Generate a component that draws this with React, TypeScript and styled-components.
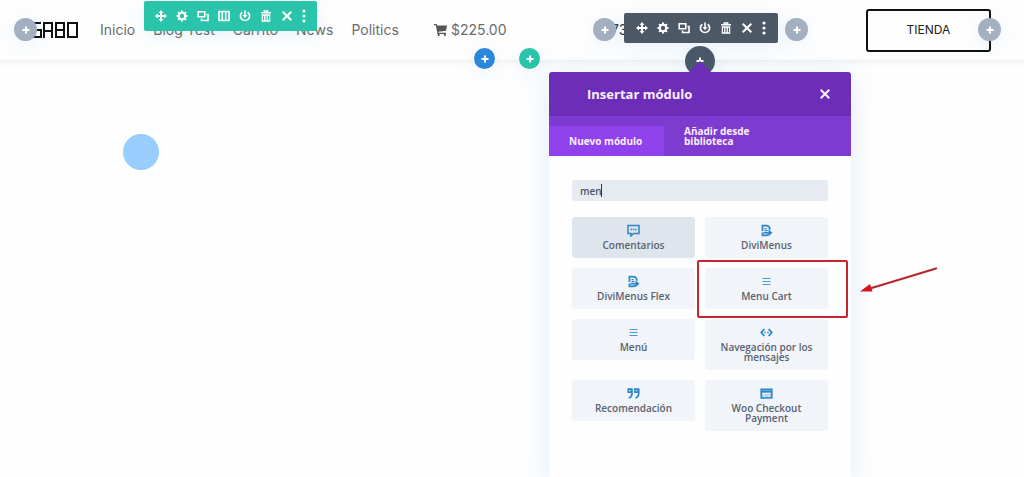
import React from "react";
import styled, { createGlobalStyle } from "styled-components";

const GlobalStyle = createGlobalStyle`
  *, *::before, *::after { box-sizing: border-box; }
  body { margin: 0; background: #fefefe; font-family: "Open Sans", sans-serif; }
  button, input { font: inherit; border: 0; margin: 0; padding: 0; }
  button { cursor: pointer; }
  svg { display: block; }
`;

const Page = styled.div`
  position: relative;
  min-height: 100vh;
  overflow: hidden;
`;

const Header = styled.header`
  position: relative;
  display: flex;
  align-items: center;
  height: 60px;
  padding: 0 33px;
  background: #fefefe;
  box-shadow: 0 1px 8px rgba(0, 0, 0, 0.08);
  font-family: Inter, sans-serif;
  font-size: 14px;
  line-height: 20px;
  color: #6c6c6c;
`;

const Logo = styled.a`
  flex: none;
  width: 45px;
  margin-right: 22px;
`;

const Nav = styled.nav`
  display: flex;
  gap: 18px;
  width: 334px;
  flex: none;
`;

const NavLink = styled.a`
  color: inherit;
  text-decoration: none;
  white-space: nowrap;
`;

const CartLink = styled(NavLink)`
  display: flex;
  align-items: center;
  gap: 4px;
  width: 177px;
  flex: none;
`;

const Phone = styled.span`
  color: #333;
`;

const StoreButton = styled.button`
  width: 125px;
  height: 43px;
  margin-left: auto;
  border: 2px solid #111;
  border-radius: 3px;
  background: #fefefe;
  color: #222;
  font-size: 12px;
`;

const Toolbar = styled.div<{ $tone: string; $left: number; $top: number; $pad: number }>`
  position: absolute;
  z-index: 3;
  left: ${(p) => p.$left}px;
  top: ${(p) => p.$top}px;
  display: flex;
  align-items: center;
  gap: 9px;
  height: 30px;
  padding: 0 ${(p) => p.$pad}px;
  border-radius: 2px;
  background: ${(p) => p.$tone};
  box-shadow: 0 4px 20px rgba(43, 135, 218, 0.1);
`;

const ToolButton = styled.button<{ $narrow?: boolean }>`
  display: grid;
  place-items: center;
  width: ${(p) => (p.$narrow ? 4 : 12)}px;
  height: 20px;
  background: none;
  color: #fff;
`;

const AddButton = styled.button<{ $tone: string; $x: number; $y: number; $size: number }>`
  position: absolute;
  z-index: 2;
  left: ${(p) => p.$x}px;
  top: ${(p) => p.$y}px;
  display: grid;
  place-items: center;
  width: ${(p) => p.$size}px;
  height: ${(p) => p.$size}px;
  border-radius: 50%;
  background: ${(p) => p.$tone};
  color: #fff;
  box-shadow: 0 4px 20px rgba(43, 135, 218, 0.1);
`;

const Loader = styled.div`
  width: 36px;
  height: 36px;
  margin: 74px 0 0 123px;
  border-radius: 50%;
  background: #99cdfd;
`;

const Dialog = styled.section`
  position: absolute;
  z-index: 4;
  top: 72px;
  bottom: 0;
  left: 549px;
  width: 302px;
  border-radius: 3px 3px 0 0;
  background: #fefefe;
  box-shadow: 0 5px 30px rgba(43, 135, 218, 0.16);

  &::before {
    content: "";
    position: absolute;
    top: -11px;
    left: 139px;
    border: 12px solid transparent;
    border-top: 0;
    border-bottom-color: #6c2eb9;
  }
`;

const DialogHeader = styled.div`
  display: flex;
  align-items: center;
  justify-content: space-between;
  height: 44px;
  padding: 0 20px 0 38px;
  border-radius: 3px 3px 0 0;
  background: #6c2eb9;
  color: #fbeeff;
`;

const DialogTitle = styled.h2`
  margin: 0;
  font-size: 13px;
  line-height: 20px;
  font-weight: 700;
`;

const CloseButton = styled.button`
  display: grid;
  place-items: center;
  width: 12px;
  height: 20px;
  background: none;
  color: inherit;
`;

const Tabs = styled.div`
  display: flex;
  align-items: flex-end;
  height: 40px;
  background: #7e3bd0;
`;

const Tab = styled.button<{ $active?: boolean }>`
  width: ${(p) => (p.$active ? 115 : 120)}px;
  height: ${(p) => (p.$active ? 30 : 40)}px;
  padding: 0 20px;
  background: ${(p) => (p.$active ? "#8f42ec" : "transparent")};
  color: #fbeeff;
  font-size: 10px;
  line-height: 10px;
  font-weight: 700;
  text-align: left;
  white-space: ${(p) => (p.$active ? "nowrap" : "normal")};
`;

const DialogBody = styled.div`
  padding: 24px 23px;
`;

const SearchField = styled.div`
  position: relative;
  margin-bottom: 16px;
`;

const SearchInput = styled.input`
  display: block;
  width: 100%;
  height: 21px;
  padding: 0 8px;
  border-radius: 3px;
  background: #e6eaf1;
  color: #4c5866;
  font-size: 10px;
  font-weight: 600;
  outline: 0;
`;

const Caret = styled.span`
  position: absolute;
  top: 4px;
  left: 29px;
  width: 1px;
  height: 13px;
  background: #333;
`;

const ModuleGrid = styled.div`
  display: grid;
  grid-template-columns: 1fr 1fr;
  align-items: start;
  gap: 10px;
`;

const ModuleCell = styled.div`
  position: relative;
`;

const ModuleButton = styled.button<{ $hovered?: boolean }>`
  display: flex;
  flex-direction: column;
  align-items: center;
  gap: 3px;
  width: 100%;
  padding: 7px 12px 8px;
  border-radius: 3px;
  background: ${(p) => (p.$hovered ? "#dfe5ec" : "#f1f4f9")};
  color: #58636f;
  font-size: 10px;
  line-height: 10px;
  font-weight: 600;

  svg { color: #2b87c8; }
`;

const Highlight = styled.div`
  position: absolute;
  inset: -8px -20px -9px -8px;
  border: 2px solid #c9232b;
  border-radius: 2px;
  pointer-events: none;
`;

const Arrow = styled.svg`
  position: absolute;
  z-index: 5;
  left: 858px;
  top: 264px;
`;

const stroke = { fill: "none", stroke: "currentColor", strokeWidth: 2 } as const;

const toolShapes: Record<string, React.ReactNode> = {
  Mover: (
    <>
      <path d="M6 2v8M2 6h8" {...stroke} />
      <path d="M6 0l2.400 3H3.600zM6 12l2.400-3H3.600zM0 6l3-2.400v4.800zM12 6l-3-2.400v4.800z" fill="currentColor" />
    </>
  ),
  Ajustes: (
    <>
      <circle cx="6" cy="6" r="3.200" {...stroke} />
      <path d="M6 .5v2M6 9.500v2M.5 6h2M9.500 6h2M2.100 2.100l1.400 1.400M8.500 8.500l1.400 1.400M2.100 9.900l1.400-1.400M8.500 3.500l1.400-1.400" {...stroke} />
    </>
  ),
  Duplicar: (
    <path d="M1.200 1.700h6.600v5H1.200zM9.500 4.500h1.500v6H4.500V8.500" {...stroke} strokeWidth={1.600} />
  ),
  Columnas: <path d="M1 1.500h10v9H1zM4.300 1.500v9M7.700 1.500v9" {...stroke} strokeWidth={1.600} />,
  Guardar: (
    <>
      <path d="M3.300 2.200a4.600 4.600 0 1 0 5.400 0" {...stroke} strokeWidth={1.700} />
      <path d="M6 .5V6" {...stroke} strokeWidth={1.600} />
      <path d="M3.500 5h5L6 8.200z" fill="currentColor" />
    </>
  ),
  Eliminar: (
    <>
      <path d="M1 2.800h10M4.300 2.500V1h3.400v1.500" {...stroke} strokeWidth={1.500} />
      <path d="M2.400 5v6h7.200V5zM4.800 5v6M7.200 5v6" {...stroke} strokeWidth={1.300} />
    </>
  ),
  Cerrar: <path d="M1.700 1.700l8.600 8.600M10.300 1.700l-8.600 8.600" {...stroke} />,
};

const ToolIcon = ({ name }: { name: string }) => (
  <svg width="12" height="12" viewBox="0 0 12 12" aria-hidden="true">{toolShapes[name]}</svg>
);

const Tools = ({ names }: { names: string[] }) => (
  <>
    {names.map((name) => (
      <ToolButton key={name} aria-label={name}><ToolIcon name={name} /></ToolButton>
    ))}
    <ToolButton $narrow aria-label="Más opciones">
      <svg width="4" height="14" viewBox="0 0 4 14" fill="currentColor" aria-hidden="true">
        <circle cx="2" cy="2" r="1.600" /><circle cx="2" cy="7" r="1.600" /><circle cx="2" cy="12" r="1.600" />
      </svg>
    </ToolButton>
  </>
);

const adders = [
  { label: "Añadir antes del logo", tone: "#a2b0c1", x: 14, y: 18, size: 23 },
  { label: "Añadir antes del módulo", tone: "#a2b0c1", x: 593, y: 18, size: 23 },
  { label: "Añadir después del módulo", tone: "#a2b0c1", x: 785, y: 18, size: 23 },
  { label: "Añadir después del botón", tone: "#a2b0c1", x: 978, y: 18, size: 23 },
  { label: "Añadir sección", tone: "#2b87da", x: 474, y: 48, size: 21 },
  { label: "Añadir fila", tone: "#29c4a9", x: 519, y: 48, size: 21 },
  { label: "Añadir módulo", tone: "#4c5866", x: 685, y: 46, size: 30 },
];

const comment = (
  <>
    <path d="M1 1.500h11v8H6.500L4 12V9.500H1z" {...stroke} strokeWidth={1.500} />
    <path d="M3.500 5.500h1.500M5.800 5.500h1.500M8.100 5.500h1.500" {...stroke} strokeWidth={1.500} />
  </>
);
const divi = (
  <>
    <path d="M2.500 7V1.700h3.500c2.300 0 3.700 1.600 3.800 4M2.500 8.500v2.800H6c1.200 0 2-.4 2.600-1" {...stroke} strokeWidth={1.800} />
    <path d="M4.500 4.600h2.200M4.500 6.600h3" {...stroke} strokeWidth={1.200} />
    <path d="M3.500 8.800h6" {...stroke} strokeWidth={1.600} />
    <path d="M8.500 5.500l4 3.300-4 3.500z" fill="currentColor" />
  </>
);
const lines = <path d="M2.500 3.500h8M2.500 6.500h8M2.500 9.500h8" {...stroke} strokeWidth={1} opacity={0.85} />;

const modules = [
  { label: "Comentarios", icon: comment, hovered: true },
  { label: "DiviMenus", icon: divi },
  { label: "DiviMenus Flex", icon: divi },
  { label: "Menu Cart", icon: lines, highlighted: true },
  { label: "Menú", icon: lines },
  {
    label: "Navegación por los mensajes",
    icon: (
      <>
        <path d="M4.300 3L1.300 6.500l3 3.500M8.700 3l3 3.500-3 3.500" {...stroke} strokeWidth={1.800} />
        <path d="M4.300 6.500h1.500M7.200 6.500h1.500" {...stroke} strokeWidth={1.500} />
      </>
    ),
  },
  {
    label: "Recomendación",
    icon: (
      <path d="M1.300 2.200h3v3h-3zM5 1.400v5.100c0 2.400-1.200 3.800-3.200 4.500M7.900 2.200h3v3h-3zM11.700 1.400v5.100c0 2.400-1.200 3.800-3.200 4.500" {...stroke} strokeWidth={1.700} />
    ),
  },
  {
    label: "Woo Checkout Payment",
    icon: (
      <>
        <path d="M1.200 2.200h10.600v8.800H1.200z" fill="currentColor" fillOpacity={0.35} stroke="currentColor" strokeWidth={1.600} />
        <path d="M1 4.500h11" {...stroke} strokeWidth={2} />
        <path d="M2.500 6.500h8M3 8.800h3M7.500 8.800H9.500" fill="none" stroke="#f1f4f9" strokeWidth={1} />
      </>
    ),
  },
];

export default function App() {
  return (
    <Page>
      <GlobalStyle />
      <Header>
        <Logo href="#" aria-label="Gabo">
          <svg width="45" height="16" viewBox="0 0 45 16" fill="none" stroke="#111" strokeWidth="2" aria-hidden="true">
            <path d="M8 1H1v14h7V8H4" />
            <path d="M11 16V1h8v15M11 9h8" />
            <path d="M23 1h8v14h-8zM23 8h8" />
            <path d="M35 1h9v14h-9z" />
          </svg>
        </Logo>
        <Nav>
          {["Inicio", "Blog Test", "Carrito", "News", "Politics"].map((item) => (
            <NavLink key={item} href="#">{item}</NavLink>
          ))}
        </Nav>
        <CartLink href="#">
          <svg width="13" height="12" viewBox="0 0 13 12" fill="#555" aria-hidden="true">
            <path d="M0 0h2.700l.4 1.500H13l-1 5.300-7.700.9.200 1H12V10H3.500L1.800 1.200H0z" />
            <circle cx="4.600" cy="10.900" r="1.100" /><circle cx="10.800" cy="10.900" r="1.100" />
          </svg>
          $225.00
        </CartLink>
        <Phone>73</Phone>
        <StoreButton>TIENDA</StoreButton>
        <Toolbar $tone="#29c4a9" $left={144} $top={1} $pad={11} role="toolbar" aria-label="Fila">
          <Tools names={["Mover", "Ajustes", "Duplicar", "Columnas", "Guardar", "Eliminar", "Cerrar"]} />
        </Toolbar>
        <Toolbar $tone="#4c5866" $left={624} $top={13} $pad={12} role="toolbar" aria-label="Módulo">
          <Tools names={["Mover", "Ajustes", "Duplicar", "Guardar", "Eliminar", "Cerrar"]} />
        </Toolbar>
      </Header>
      {adders.map((a) => (
        <AddButton key={a.label} aria-label={a.label} $tone={a.tone} $x={a.x} $y={a.y} $size={a.size}>
          <svg width="8" height="8" viewBox="0 0 8 8" aria-hidden="true">
            <path d="M4 .5v7M.5 4h7" {...stroke} />
          </svg>
        </AddButton>
      ))}
      <Loader />
      <Dialog role="dialog" aria-labelledby="dialog-title">
        <DialogHeader>
          <DialogTitle id="dialog-title">Insertar módulo</DialogTitle>
          <CloseButton aria-label="Cerrar ventana"><ToolIcon name="Cerrar" /></CloseButton>
        </DialogHeader>
        <Tabs role="tablist">
          <Tab role="tab" aria-selected="true" $active>Nuevo módulo</Tab>
          <Tab role="tab" aria-selected="false">Añadir desde biblioteca</Tab>
        </Tabs>
        <DialogBody>
          <SearchField>
            <SearchInput aria-label="Buscar módulo" defaultValue="men" />
            <Caret />
          </SearchField>
          <ModuleGrid>
            {modules.map((m) => (
              <ModuleCell key={m.label}>
                <ModuleButton $hovered={m.hovered}>
                  <svg width="13" height="13" viewBox="0 0 13 13" aria-hidden="true">{m.icon}</svg>
                  <span>{m.label}</span>
                </ModuleButton>
                {m.highlighted && <Highlight />}
              </ModuleCell>
            ))}
          </ModuleGrid>
        </DialogBody>
      </Dialog>
      <Arrow width="82" height="32" viewBox="0 0 82 32" aria-hidden="true">
        <path d="M78 4.500L12 24.500" fill="none" stroke="#b8262c" strokeWidth="2.200" strokeLinecap="round" />
        <path d="M2 27.500L12 20l2.500 7.500z" fill="#d8151c" />
      </Arrow>
    </Page>
  );
}
